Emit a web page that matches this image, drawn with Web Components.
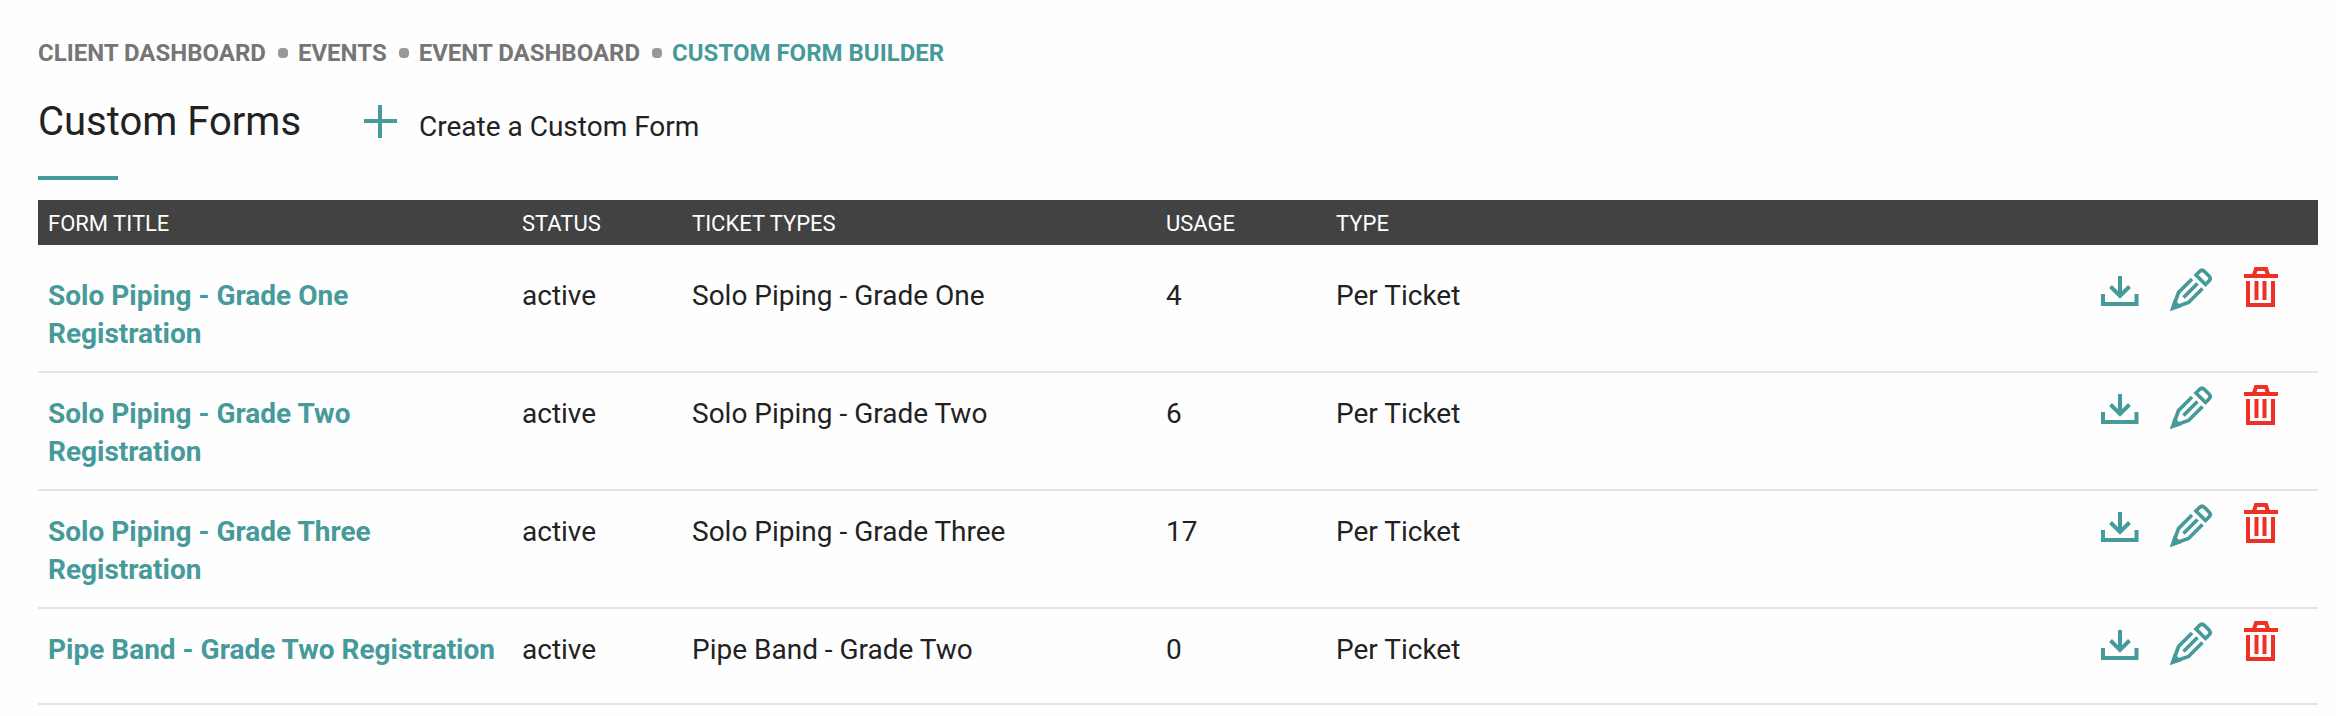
<!DOCTYPE html>
<html lang="en">
<head>
<meta charset="utf-8">
<title>Custom Forms</title>
<style>
  body { margin: 0; background: #fefefe; color: #222; font: 28px/38px Roboto, sans-serif; --accent: #469a9a; --danger: #ee3124; }
</style>
</head>
<body>
<form-page>
  <bread-crumbs slot="crumbs">
    <crumb-link href="#client">Client Dashboard</crumb-link>
    <crumb-link href="#events">Events</crumb-link>
    <crumb-link href="#event">Event Dashboard</crumb-link>
    <crumb-link href="#forms" current>Custom Form Builder</crumb-link>
  </bread-crumbs>
  <page-heading slot="heading">Custom Forms<create-link slot="action" href="#new">Create a Custom Form</create-link></page-heading>
  <forms-table></forms-table>
</form-page>

<script>
const define = (name, render) => customElements.define(name, class extends HTMLElement {
  connectedCallback() {
    if (this.shadowRoot) return;
    this.attachShadow({ mode: 'open' }).innerHTML = render(this);
  }
});

define('form-page', () => `
  <style>
    :host { display: block; }
    main { padding: 34px 18px 0 38px; }
  </style>
  <main><slot name="crumbs"></slot><slot name="heading"></slot><slot></slot></main>`);

define('bread-crumbs', () => `
  <style>
    :host { display: block; }
    nav { display: flex; flex-wrap: wrap; font-size: 24px; line-height: 38px; font-weight: 700; text-transform: uppercase; }
  </style>
  <nav aria-label="Breadcrumb"><slot></slot></nav>`);

define('crumb-link', el => `
  <style>
    :host { display: flex; align-items: center; color: #767676; }
    :host([current]) { color: var(--accent); }
    a { color: inherit; text-decoration: none; }
    :host(:not([current]))::after { content: ""; width: 10px; height: 10px; margin: 0 10px 0 12px; border-radius: 4px; background: #999; }
  </style>
  <a href="${el.getAttribute('href')}"${el.hasAttribute('current') ? ' aria-current="page"' : ''}><slot></slot></a>`);

define('page-heading', () => `
  <style>
    :host { display: block; padding-top: 24px; }
    header { display: flex; align-items: center; gap: 62px; height: 52px; }
    h1 { margin: 0; font-size: 40px; line-height: 52px; font-weight: 400; }
    .rule { width: 80px; height: 4px; margin: 28px 0 20px; background: var(--accent); }
  </style>
  <header><h1><slot></slot></h1><slot name="action"></slot></header>
  <div class="rule"></div>`);

define('create-link', el => `
  <style>
    :host { display: block; }
    a { display: flex; align-items: center; gap: 22px; color: inherit; text-decoration: none; }
    svg { display: block; }
    span { padding-top: 10px; }
  </style>
  <a href="${el.getAttribute('href')}">
    <svg width="34" height="34" viewBox="0 0 34 34" fill="none" stroke="var(--accent)" stroke-width="4" aria-hidden="true"><path d="M17 0v33M1 16h33"/></svg>
    <span><slot></slot></span>
  </a>`);

const icons = {
  download: '<path d="M24 11v20M14.500 21.500l9.500 9.500 9.500-9.500M7 29v10h33.500V29"/>',
  edit: '<path d="M25 14 11.500 27.500 6 43l15.500-5.500L35.500 23.500M16.500 32.500 30.500 18.500M29 10l3.500-3.500c1.500-1.500 3.500-1.500 5 0l4.500 4.500c1.500 1.500 1.500 3.500 0 5l-3.500 3.500z" stroke-width="3.700"/><path d="M3 46l4-12 8 8z" fill="currentColor" stroke="none"/>',
  remove: '<path d="M6 11h34M16 10l2-6h10l2 6M10 16v24h25V16M18.500 16v19M26.500 16v19"/>'
};

define('action-icon', el => `
  <style>
    :host { display: block; color: var(--accent); }
    :host([kind="remove"]) { color: var(--danger); }
    button { display: block; padding: 0; border: 0; background: none; color: inherit; cursor: pointer; }
    svg { display: block; }
  </style>
  <button type="button" aria-label="${el.getAttribute('label')}">
    <svg width="48" height="48" viewBox="0 0 48 48" fill="none" stroke="currentColor" stroke-width="4" aria-hidden="true">${icons[el.getAttribute('kind')]}</svg>
  </button>`);

const forms = [
  ['Solo Piping - Grade One', 4],
  ['Solo Piping - Grade Two', 6],
  ['Solo Piping - Grade Three', 17],
  ['Pipe Band - Grade Two', 0]
];

define('forms-table', () => `
  <style>
    :host { display: block; }
    table { width: 100%; table-layout: fixed; border-collapse: separate; border-spacing: 0; }
    .wide { width: 474px; }
    .narrow { width: 170px; }
    th { padding: 2px 10px 0; background: #424242; color: #fff; font-size: 22px; line-height: 43px; font-weight: 400; text-align: left; text-transform: uppercase; }
    td { height: 54px; padding: 22px 10px 18px; border-bottom: 2px solid #e6e6e6; vertical-align: top; }
    tbody tr:first-child td { padding-top: 32px; }
    td a { color: var(--accent); font-weight: 700; text-decoration: none; }
    .actions { display: flex; justify-content: flex-end; gap: 23px; height: 48px; margin: -12px 22px 0 0; }
  </style>
  <table>
    <colgroup><col class="wide"><col class="narrow"><col class="wide"><col class="narrow"><col><col></colgroup>
    <thead><tr><th>Form Title</th><th>Status</th><th>Ticket Types</th><th>Usage</th><th>Type</th><th></th></tr></thead>
    <tbody>${forms.map(([name, usage]) => `
      <tr>
        <td><a href="#form">${name} Registration</a></td>
        <td>active</td><td>${name}</td><td>${usage}</td><td>Per Ticket</td>
        <td><div class="actions">
          <action-icon kind="download" label="Download"></action-icon>
          <action-icon kind="edit" label="Edit"></action-icon>
          <action-icon kind="remove" label="Delete"></action-icon>
        </div></td>
      </tr>`).join('')}
    </tbody>
  </table>`);
</script>
</body>
</html>
